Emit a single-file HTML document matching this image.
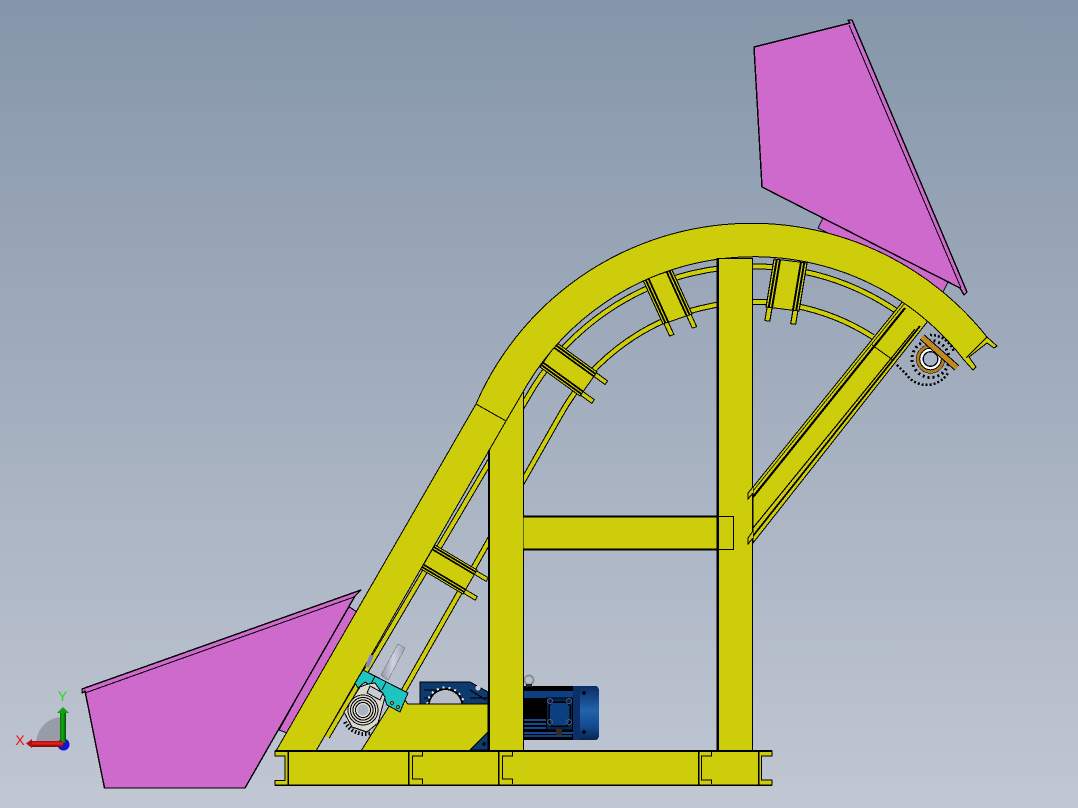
<!DOCTYPE html>
<html><head><meta charset="utf-8"><style>
html,body{margin:0;padding:0;width:1078px;height:808px;overflow:hidden;background:#a4aebd}
svg{display:block}
text{font-family:"Liberation Sans",sans-serif}
</style></head><body>
<svg width="1078" height="808" viewBox="0 0 1078 808" xmlns="http://www.w3.org/2000/svg" shape-rendering="crispEdges">
<defs>
<linearGradient id="bg" x1="0" y1="0" x2="0" y2="1"><stop offset="0" stop-color="#8596aa"/><stop offset="1" stop-color="#c1c7d3"/></linearGradient>
<linearGradient id="cap" x1="0" y1="0" x2="0" y2="1"><stop offset="0" stop-color="#0a2c66"/><stop offset=".45" stop-color="#2263ac"/><stop offset=".75" stop-color="#134a90"/><stop offset="1" stop-color="#08244f"/></linearGradient>
<linearGradient id="rod" x1="0" y1="0" x2="1" y2="0"><stop offset="0" stop-color="#8f95aa"/><stop offset=".5" stop-color="#cfd3dd"/><stop offset="1" stop-color="#9ea3b5"/></linearGradient>
<linearGradient id="gr" x1="0" y1="0" x2="1" y2="0"><stop offset="0" stop-color="#0a6a0a"/><stop offset=".4" stop-color="#12b012"/><stop offset="1" stop-color="#065006"/></linearGradient>
<linearGradient id="rd" x1="0" y1="0" x2="0" y2="1"><stop offset="0" stop-color="#a01010"/><stop offset=".4" stop-color="#ee2020"/><stop offset="1" stop-color="#700808"/></linearGradient>
<g id="xm">
<path d="M1,50V64H5.500V50M24.500,50V64H29V50" fill="#cdcd0b" stroke="#000" stroke-width="1"/>
<rect x="0" y="0" width="30" height="50" fill="#cdcd0b" stroke="#000" stroke-width="1"/>
<path d="M2.500,0V50M5.500,0V50M24.500,0V50M27.500,0V50" stroke="#000" stroke-width="1.800" fill="none"/>
</g>
</defs>
<rect width="1078" height="808" fill="url(#bg)"/>

<!-- top right hopper -->
<path d="M823,218L948,282L943,292L818,228Z" fill="#cd6acc" stroke="#000" stroke-width="1"/>
<path d="M754,47L850,23L848,20L852,20L967,292L964,295L960,288L762,187Z" fill="#cd6acc" stroke="#000" stroke-width="1.400" stroke-linejoin="round"/>
<path d="M849,25L961,288" stroke="#000" stroke-width="1" fill="none"/>

<!-- left hopper -->
<path d="M279,730L287,733L357,612L348,606Z" fill="#cd6acc" stroke="#000" stroke-width="1"/>
<path d="M82,693L82,689L361,590L355,596L245,788L104.500,788L85,691Z" fill="#cd6acc" stroke="#000" stroke-width="1.400" stroke-linejoin="round"/>
<path d="M85,693L354,597" stroke="#000" stroke-width="1" fill="none"/>

<!-- rails -->
<g fill="none" stroke-linejoin="round">
<path d="M327,737L529,395A257,257 0 0 1 895,310" stroke="#000" stroke-width="6"/>
<path d="M327,737L529,395A257,257 0 0 1 895,310" stroke="#cdcd0b" stroke-width="4"/>
<path d="M403,692L561,414A221,221 0 0 1 873,337" stroke="#000" stroke-width="6"/>
<path d="M403,692L561,414A221,221 0 0 1 873,337" stroke="#cdcd0b" stroke-width="4"/>
</g>

<!-- cross members -->
<use href="#xm" transform="matrix(-.467 .8 .84 .5 435 545)"/>
<use href="#xm" transform="matrix(-.567 .8 .8 .58 557 343)"/>
<use href="#xm" transform="matrix(.967 -.333 .4 .88 643 280)"/>
<use href="#xm" transform="matrix(1.100 .133 -.16 .96 774 259)"/>

<!-- right sprocket -->
<g fill="none">
<path d="M897,365L906,374A25,25 0 0 0 948,373" stroke="#000" stroke-width="2.500" stroke-dasharray="2 2"/>
<path d="M930,335A25,25 0 0 1 954,352" stroke="#000" stroke-width="2.500" stroke-dasharray="2 2"/>
<circle cx="930.500" cy="359" r="18.500" stroke="#000" stroke-width="3" stroke-dasharray="2 3"/>
<circle cx="930.500" cy="359" r="14" fill="#a9b3c6" stroke="#000" stroke-width="1"/>
<circle cx="930.500" cy="359" r="12.500" stroke="#b47e1e" stroke-width="3"/>
<circle cx="930.500" cy="359" r="9.500" stroke="#fff" stroke-width="3"/>
<circle cx="930.500" cy="359" r="10.800" stroke="#000" stroke-width="1"/>
<circle cx="930.500" cy="359" r="7.300" stroke="#000" stroke-width="1.200"/>
</g>
<path d="M922,337L957,368" stroke="#000" stroke-width="7" fill="none"/>
<path d="M922,337L957,368" stroke="#c08a20" stroke-width="5" fill="none"/>

<!-- brace -->
<path d="M753,487L908,295L935,312L753,543Z" fill="#cdcd0b" stroke="#000" stroke-width="1"/>
<path d="M753,497L905,308" stroke="#000" stroke-width="2.200" fill="none"/>
<path d="M753,491L904,304" stroke="#000" stroke-width=".8" fill="none"/>
<path d="M753,528L915,329" stroke="#000" stroke-width="1.200" fill="none"/>
<path d="M753,536L920,326" stroke="#000" stroke-width="1.800" fill="none"/>
<path d="M872,345L893,360" stroke="#000" stroke-width="1" fill="none"/>

<!-- gearbox -->
<path d="M420,682H470L488,692V706H420Z" fill="#0e3a6e" stroke="#000" stroke-width="1"/>
<path d="M424,690H444M470,690L486,700M424,698H436M470,698H488" stroke="#000" stroke-width="1.200" fill="none"/>
<circle cx="478" cy="688" r="2.500" fill="#c8ccd6"/>
<circle cx="445.500" cy="706" r="18" fill="#000"/>
<circle cx="445.500" cy="706" r="18.500" fill="none" stroke="#e8e8e8" stroke-width="2" stroke-dasharray="2 4"/>
<circle cx="445.500" cy="706" r="16" fill="#b6bcc8"/>

<!-- motor -->
<rect x="523" y="686" width="52" height="54" fill="#000"/>
<rect x="523" y="691" width="52" height="7" fill="#0d3f82"/>
<path d="M523,720H547M523,724H547M523,728H547M523,733H575" stroke="#14498f" stroke-width="1.600" fill="none"/>
<path d="M523,736H572" stroke="#0d3f82" stroke-width="2" fill="none"/>
<path d="M573,686H595Q599,686 599,691V735Q599,740 595,740H573Z" fill="url(#cap)"/>
<rect x="573" y="686" width="7" height="54" fill="#0b2f66"/>
<rect x="546.500" y="698" width="26" height="32" fill="#062450" stroke="#000" stroke-width="1"/>
<path d="M552,702H567L570,706V722L567,726H552L549,722V706Z" fill="#0c3f80" stroke="#000" stroke-width="1.500"/>
<circle cx="550" cy="701" r="2.500" fill="none" stroke="#557" stroke-width="1"/>
<circle cx="569" cy="701" r="2.500" fill="none" stroke="#557" stroke-width="1"/>
<circle cx="550" cy="722" r="2.500" fill="none" stroke="#557" stroke-width="1"/>
<circle cx="569" cy="722" r="2.500" fill="none" stroke="#557" stroke-width="1"/>
<rect x="556" y="729" width="6" height="6" fill="#3a2a1a"/>
<circle cx="584" cy="693" r="1.800" fill="#000"/>
<circle cx="584" cy="732" r="1.800" fill="#000"/>
<circle cx="529" cy="680" r="4.500" fill="none" stroke="#8c8c8c" stroke-width="1.800"/>
<rect x="526" y="684" width="6" height="3" fill="#223"/>

<!-- shelf -->
<path d="M361,751L398,692L408,704H488V732L469,751Z" fill="#cdcd0b" stroke="#000" stroke-width="1"/>
<path d="M488,732L470,750H488Z" fill="#0e3a6e" stroke="#000" stroke-width="1"/>
<circle cx="484" cy="744" r="1.800" fill="#000"/>

<!-- column 1 fill -->
<rect x="489" y="392" width="34.500" height="359" fill="#cdcd0b"/>

<!-- main curved rail -->
<path d="M276,751L476,404A300.500,300.500 0 0 1 987,337L997,346L994,348L987,343L969,357L976,367L973,370L964,360A265,265 0 0 0 523,392L506,421L316,751Z" fill="#cdcd0b" stroke="#000" stroke-width="1" stroke-linejoin="miter"/>
<path d="M476,404L506,421M987,337L966,358" stroke="#000" stroke-width="1" fill="none"/>

<!-- columns & beam lines -->
<path d="M489,450V751" stroke="#000" stroke-width="2.200" fill="none"/>
<path d="M523.500,392V751" stroke="#000" stroke-width="1.200" fill="none"/>
<rect x="523.500" y="516.500" width="194" height="33" fill="#cdcd0b"/>
<path d="M523.500,516.500H718M523.500,549.500H718" stroke="#000" stroke-width="1.800" fill="none"/>
<rect x="717.500" y="258.500" width="35" height="493" fill="#cdcd0b" stroke="#000" stroke-width="1.200"/>
<path d="M717.800,258V751" stroke="#000" stroke-width="2.200" fill="none"/>
<path d="M718,516.500H733.500V549.500H718" fill="none" stroke="#000" stroke-width="1"/>
<path d="M753,487L748,493V499L753,493M753,531L748,538V544L753,538" fill="#cdcd0b" stroke="#000" stroke-width="1"/>

<!-- blue tag, rod, bracket, bearing -->
<path d="M367,667L372,655" stroke="#7f83c8" stroke-width="4" fill="none"/>
<path d="M398,644L405,648L388,680L381,675Z" fill="url(#rod)" stroke="#777" stroke-width=".6"/>
<path d="M355,683L363,670L408,693L400,712L387,705L383,694L365,682L358,688Z" fill="#1fc4c0" stroke="#000" stroke-width="1" stroke-linejoin="round"/>
<path d="M375,676L371,684M386,682L382,690" stroke="#000" stroke-width=".8" fill="none"/>
<circle cx="392" cy="703" r="1.500" fill="#b08a20" stroke="#000" stroke-width=".6"/>
<circle cx="398" cy="707" r="1.500" fill="#b08a20" stroke="#000" stroke-width=".6"/>
<path d="M345,722A23,23 0 0 0 372,733" stroke="#000" stroke-width="4" stroke-dasharray="1.500 2" fill="none"/>
<path d="M344,712L360,687L368,684L375,683L385,697L381,712L378,723L367,732L352,727Z" fill="#dcd7cc" stroke="#000" stroke-width="1" stroke-linejoin="round"/>
<path d="M370,686L383,693L380,700L367,693Z" fill="#c8ccd4" stroke="#000" stroke-width="1"/>
<g fill="none" stroke="#000" stroke-width="1">
<circle cx="363" cy="710" r="15"/><circle cx="363" cy="710" r="12.500"/><circle cx="363" cy="710" r="10"/><circle cx="363" cy="710" r="7.500"/>
</g>
<circle cx="363" cy="710" r="5.500" fill="#a9b3c6"/>

<!-- base -->
<path d="M275,751H772V756H761.700V780H772V785H275V780.500H285V756H275Z" fill="#cdcd0b" stroke="#000" stroke-width="1"/>
<path d="M275,751H772" stroke="#000" stroke-width="2" fill="none"/>
<path d="M275,785H772" stroke="#000" stroke-width="1.500" fill="none"/>
<path d="M288,751V785M408.500,751V785M498.500,751V785M698.500,751V785M758.500,751V785" stroke="#000" stroke-width="1.500" fill="none"/>
<g fill="none" stroke="#000" stroke-width="1">
<path d="M422.700,752V756H412.700V779H422.700V784"/>
<path d="M512.700,752V756H502.700V779H512.700V784"/>
<path d="M711.700,752V756H701.700V780H711.700V784"/>
</g>

<!-- triad -->
<g shape-rendering="geometricPrecision">
<path d="M36,744A27,27 0 0 1 63,717V744Z" fill="#989ca6"/>
<circle cx="63.500" cy="744.500" r="6" fill="#1212d8"/>
<rect x="60" y="713" width="6" height="30" fill="url(#gr)"/>
<path d="M63,707L69,713H57Z" fill="#10a010"/>
<rect x="32" y="741" width="31" height="6" fill="url(#rd)"/>
<path d="M26,743.500L32,739V748Z" fill="#b01010"/>
</g>
<text x="62.500" y="701" font-size="14" fill="#22dd22" text-anchor="middle">Y</text>
<text x="20" y="745" font-size="14" fill="#ee1111" text-anchor="middle">X</text>
</svg>
</body></html>
